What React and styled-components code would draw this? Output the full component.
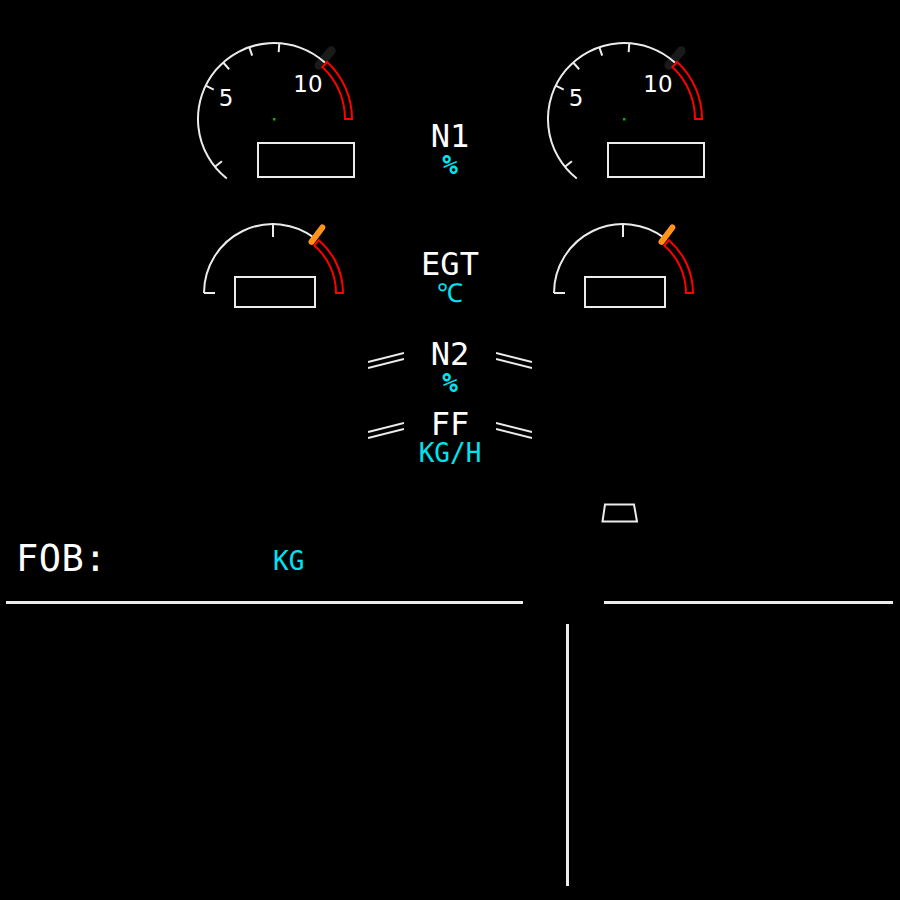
import React from "react";
import styled, { createGlobalStyle } from "styled-components";

const GlobalStyle = createGlobalStyle`
  html, body {
    margin: 0;
    padding: 0;
    background: #000;
  }
  body {
    font-family: "DejaVu Sans Mono", "Liberation Mono", monospace;
    color: #fff;
  }
`;

const WHITE = "#ececec";
const CYAN = "#00e4f2";
const RED = "#ff0000";
const ORANGE = "#ff9418";

// clockwise from 12 o'clock, in degrees
const polar = (cx, cy, r, deg) => {
  const a = (deg * Math.PI) / 180;
  return [cx + r * Math.sin(a), cy - r * Math.cos(a)];
};

const arc = (cx, cy, r, from, to) => {
  const [x1, y1] = polar(cx, cy, r, from);
  const [x2, y2] = polar(cx, cy, r, to);
  const large = Math.abs(to - from) > 180 ? 1 : 0;
  return `M${x1.toFixed(2)} ${y1.toFixed(2)} A${r} ${r} 0 ${large} 1 ${x2.toFixed(2)} ${y2.toFixed(2)}`;
};

const band = (cx, cy, rIn, rOut, from, to) => {
  const [a1, b1] = polar(cx, cy, rOut, from);
  const [a2, b2] = polar(cx, cy, rOut, to);
  const [c1, d1] = polar(cx, cy, rIn, to);
  const [c2, d2] = polar(cx, cy, rIn, from);
  return `M${a1} ${b1} A${rOut} ${rOut} 0 0 1 ${a2} ${b2} L${c1} ${d1} A${rIn} ${rIn} 0 0 0 ${c2} ${d2} Z`;
};

const tick = (cx, cy, r1, r2, deg) => {
  const [x1, y1] = polar(cx, cy, r1, deg);
  const [x2, y2] = polar(cx, cy, r2, deg);
  return `M${x1} ${y1} L${x2} ${y2}`;
};

const Page = styled.div`
  width: 900px;
  height: 900px;
  background: #000;
  overflow: hidden;
`;

const EngineGrid = styled.div`
  display: grid;
  grid-template-columns: 170px 180px 170px;
  grid-template-rows: 190px 130px 150px;
  justify-content: center;
`;

const Cell = styled.div`
  display: flex;
  flex-direction: column;
  align-items: center;
  padding-top: ${(p) => p.$top || 0}px;
`;

const Title = styled.div`
  font-size: 32px;
  line-height: 32px;
  color: #fff;
  text-align: center;
`;

const Unit = styled.div`
  font-size: 26px;
  line-height: 26px;
  color: ${CYAN};
  text-align: center;
  font-weight: ${(p) => (p.$bold ? 700 : 400)};
`;

const ParamStack = styled.div`
  display: flex;
  flex-direction: column;
  gap: 12px;
  padding-top: 18px;
`;

const ParamRow = styled.div`
  display: flex;
  justify-content: center;
  align-items: flex-start;
`;

const ParamLabel = styled.div`
  width: 92px;
  display: flex;
  flex-direction: column;
  align-items: center;
`;

const Dash = styled.svg`
  width: 36px;
  height: 20px;
  margin-top: 12px;
  flex: none;
`;

const FuelSection = styled.div`
  height: 131px;
  display: grid;
  grid-template-columns: 567px 1fr;
`;

const FobRow = styled.div`
  display: flex;
  align-items: flex-start;
  padding: 70px 0 0 16px;
`;

const FobLabel = styled.div`
  width: 257px;
  font-size: 37px;
  line-height: 37px;
  letter-spacing: 0.5px;
  color: #fff;
`;

const FobUnit = styled.div`
  font-size: 26px;
  line-height: 26px;
  color: ${CYAN};
  margin-top: 8px;
`;

const ChuteBox = styled.div`
  padding: 33px 0 0 34px;
`;

const LowerPanel = styled.div`
  display: grid;
  grid-template-columns: 517px 81px 289px;
  padding-left: 6px;
`;

const HRule = styled.div`
  height: 3px;
  background: ${WHITE};
`;

const VRule = styled.div`
  grid-column: 2;
  width: 3px;
  height: 262px;
  margin: 20px 0 0 43px;
  background: ${WHITE};
`;

const N1Gauge = () => {
  const cx = 84;
  const cy = 119;
  const r = 76;
  return (
    <svg width="170" height="190" viewBox="0 0 170 190">
      <path d={tick(cx, cy, 70, 89, 40)} stroke="#1a1a1a" strokeWidth="9" strokeLinecap="round" />
      <path d={arc(cx, cy, r, -141.6, 42)} stroke={WHITE} strokeWidth="2" fill="none" />
      {[-129, -64, -42, -19, 4].map((d) => (
        <path key={d} d={tick(cx, cy, r, r - 9, d)} stroke={WHITE} strokeWidth="2" />
      ))}
      <path d={band(cx, cy, 71, 78, 43, 90)} stroke={RED} strokeWidth="2" fill="none" />
      <text x="36" y="106" fill="#fff" fontSize="23" fontFamily="DejaVu Sans, sans-serif" textAnchor="middle">5</text>
      <text x="118" y="92" fill="#fff" fontSize="23" fontFamily="DejaVu Sans, sans-serif" textAnchor="middle">10</text>
      <rect x={cx - 1} y={cy - 1} width="2.5" height="2.5" fill="#00b400" />
      <rect x="68" y="143" width="96" height="34" stroke={WHITE} strokeWidth="2" fill="none" />
    </svg>
  );
};

const EgtGauge = () => {
  const cx = 83;
  const cy = 103;
  const r = 69;
  return (
    <svg width="170" height="130" viewBox="0 0 170 130">
      <path d={arc(cx, cy, r, -90, 38)} stroke={WHITE} strokeWidth="2" fill="none" />
      <path d={`M${cx - r} ${cy} h11`} stroke={WHITE} strokeWidth="2" />
      <path d={tick(cx, cy, r, r - 13, 0)} stroke={WHITE} strokeWidth="2" />
      <path d={band(cx, cy, 63, 70, 41, 90)} stroke={RED} strokeWidth="2" fill="none" />
      <path d={tick(cx, cy, 64, 82, 37)} stroke={ORANGE} strokeWidth="6" strokeLinecap="round" />
      <rect x="45" y="87" width="80" height="30" stroke={WHITE} strokeWidth="2" fill="none" />
    </svg>
  );
};

const DashPair = ({ flip }) => (
  <Dash viewBox="0 0 36 20">
    <g transform={flip ? "translate(36 0) scale(-1 1)" : undefined} stroke={WHITE} strokeWidth="2">
      <line x1="0" y1="12" x2="36" y2="3" />
      <line x1="0" y1="18" x2="36" y2="9" />
    </g>
  </Dash>
);

const Param = ({ title, unit, bold }) => (
  <ParamRow>
    <DashPair />
    <ParamLabel>
      <Title>{title}</Title>
      <Unit $bold={bold}>{unit}</Unit>
    </ParamLabel>
    <DashPair flip />
  </ParamRow>
);

export default function App() {
  return (
    <Page>
      <GlobalStyle />
      <EngineGrid>
        <N1Gauge />
        <Cell $top={120}>
          <Title>N1</Title>
          <Unit $bold>%</Unit>
        </Cell>
        <N1Gauge />

        <EgtGauge />
        <Cell $top={58}>
          <Title>EGT</Title>
          <Unit>℃</Unit>
        </Cell>
        <EgtGauge />

        <div />
        <ParamStack>
          <Param title="N2" unit="%" bold />
          <Param title="FF" unit="KG/H" />
        </ParamStack>
        <div />
      </EngineGrid>

      <FuelSection>
        <FobRow>
          <FobLabel>FOB:</FobLabel>
          <FobUnit>KG</FobUnit>
        </FobRow>
        <ChuteBox>
          <svg width="38" height="20" viewBox="0 0 38 20">
            <path d="M4 1.5 H33 L36 18.5 H1.5 Z" stroke={WHITE} strokeWidth="2" fill="none" />
          </svg>
        </ChuteBox>
      </FuelSection>

      <LowerPanel>
        <HRule />
        <div />
        <HRule />
        <VRule />
      </LowerPanel>
    </Page>
  );
}
